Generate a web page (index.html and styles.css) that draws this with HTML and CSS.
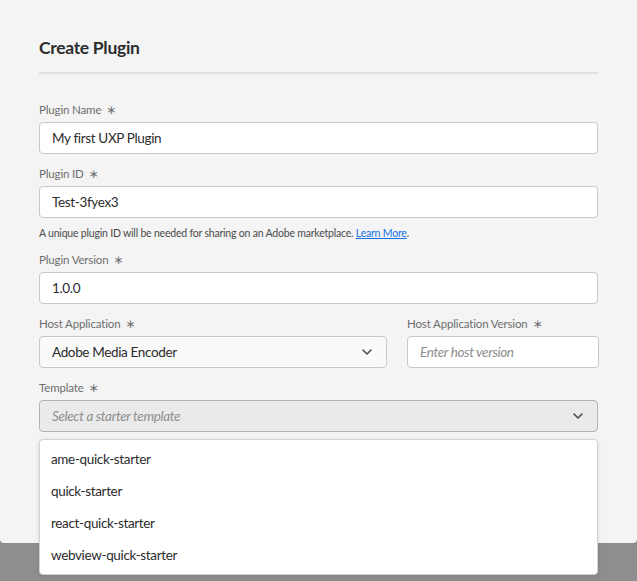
FILE: index.html
```html
<!DOCTYPE html>
<html>
	<head>
		<meta charset="UTF-8">
		<title>Create Plugin</title>
	<link rel="stylesheet" href="styles.css">
	</head>
	<body>
		<div class="dialog">
			<h2 class="title">Create Plugin</h2>
			<div class="divider"></div>

			<div class="field">
				<label class="label">Plugin Name <span class="req">∗</span></label>
				<div class="input">My first UXP Plugin</div>
			</div>

			<div class="field">
				<label class="label">Plugin ID <span class="req">∗</span></label>
				<div class="input">Test-3fyex3</div>
				<p class="help">A unique plugin ID will be needed for sharing on an Adobe marketplace. <a href="#">Learn More</a>.</p>
			</div>

			<div class="field">
				<label class="label">Plugin Version <span class="req">∗</span></label>
				<div class="input">1.0.0</div>
			</div>

			<div class="row">
				<div class="field">
					<label class="label">Host Application <span class="req">∗</span></label>
					<div class="input select">
						<span>Adobe Media Encoder</span>
						<svg class="chevron" width="10" height="6" viewBox="0 0 10 6"><path d="M1 1l4 4 4-4" fill="none" stroke="#4b4b4b" stroke-width="1.6" stroke-linecap="round" stroke-linejoin="round"/></svg>
					</div>
				</div>
				<div class="field">
					<label class="label">Host Application Version <span class="req">∗</span></label>
					<div class="input placeholder">Enter host version</div>
				</div>
			</div>

			<div class="field template">
				<label class="label">Template <span class="req">∗</span></label>
				<div class="input select open">
					<span class="placeholder">Select a starter template</span>
					<svg class="chevron" width="10" height="6" viewBox="0 0 10 6"><path d="M1 1l4 4 4-4" fill="none" stroke="#4b4b4b" stroke-width="1.6" stroke-linecap="round" stroke-linejoin="round"/></svg>
				</div>
				<ul class="popover">
					<li>ame-quick-starter</li>
					<li>quick-starter</li>
					<li>react-quick-starter</li>
					<li>webview-quick-starter</li>
				</ul>
			</div>
		</div>
		<div class="backdrop"></div>
	</body>
</html>
```

FILE: styles.css
```css
*{
	margin: 0;
	padding: 0;
	box-sizing: border-box;
}
html{
	background-color: #8e8e8e;
}
body{
	font-family: Lato, "Noto Sans", sans-serif;
	color: #2c2c2c;
}
.dialog{
	position: relative;
	z-index: 2;
	background-color: #f4f4f4;
	height: 543px;
	padding: 36px 39px 0 39px;
	border-radius: 0 0 4px 4px;
}
.backdrop{
	height: 38px;
	background-color: #8e8e8e;
}
.title{
	font-size: 17.5px;
	letter-spacing: -0.3px;
	line-height: 24px;
	font-weight: 700;
	color: #2c2c2c;
}
.divider{
	height: 2px;
	background-color: #e1e1e1;
	margin-top: 12px;
	margin-bottom: 28px;
}
.field{
	margin-bottom: 12px;
}
.label{
	display: block;
	height: 16px;
	font-size: 11.5px;
	letter-spacing: -0.15px;
	line-height: 16px;
	color: #6e6e6e;
	margin-bottom: 4px;
}
.req{
	display: inline-block;
	margin-left: 2px;
	font-family: "DejaVu Sans", sans-serif;
	font-size: 12px;
	line-height: 10px;
	color: #6e6e6e;
}
.input{
	height: 32px;
	line-height: 30px;
	padding: 0 12px;
	background-color: #fff;
	border: 1px solid #c8c8c8;
	border-radius: 4px;
	font-size: 13.5px;
	letter-spacing: -0.35px;
	color: #2c2c2c;
}
.placeholder{
	font-style: italic;
	color: #8e8e8e;
}
.help{
	font-size: 10.5px;
	letter-spacing: -0.2px;
	line-height: 16px;
	color: #4b4b4b;
	margin-top: 7px;
	margin-bottom: -1px;
}
.help a{
	color: #1473e6;
}
.row{
	display: grid;
	grid-template-columns: 348px 192px;
	column-gap: 20px;
}
.select{
	display: flex;
	align-items: center;
	justify-content: space-between;
	background-color: #fafafa;
	padding-right: 14px;
}
.select.open{
	background-color: #eaeaea;
	border-color: #b3b3b3;
}
.chevron{
	display: block;
}
.template{
	position: relative;
}
.popover{
	position: absolute;
	z-index: 5;
	left: 0;
	right: 0;
	top: 59px;
	padding: 3px 0;
	background-color: #fff;
	border: 1px solid #d3d3d3;
	border-radius: 4px;
	box-shadow: 0 1px 4px rgba(0,0,0,0.12);
	list-style: none;
}
.popover li{
	height: 32px;
	line-height: 32px;
	padding: 0 11px;
	font-size: 13.5px;
	letter-spacing: -0.35px;
	color: #2c2c2c;
}
```
